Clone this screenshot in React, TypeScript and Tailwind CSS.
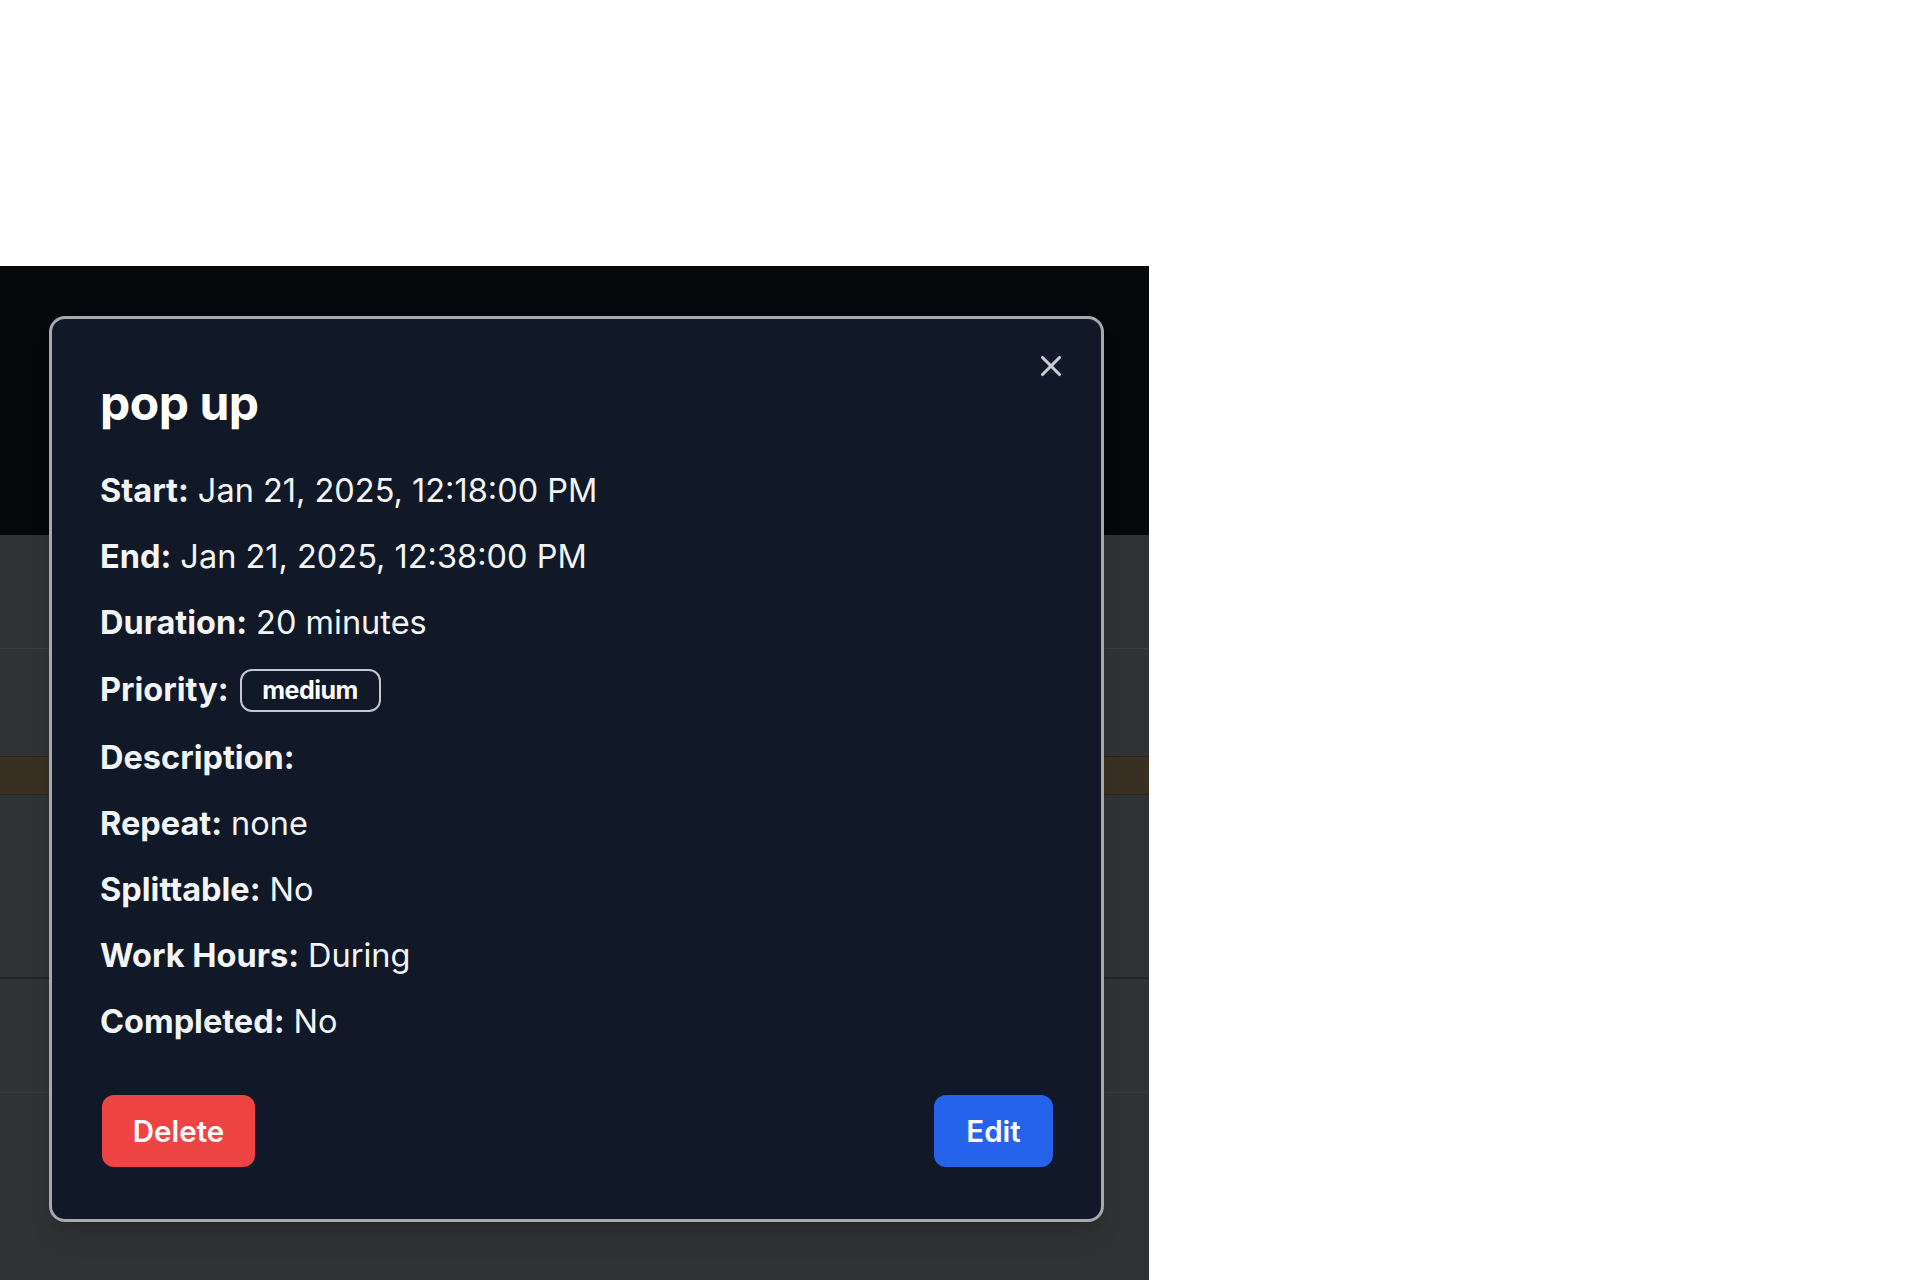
import { X } from 'lucide-react'

const rows: { label: string; value?: string }[] = [
  { label: 'Start:', value: 'Jan 21, 2025, 12:18:00 PM' },
  { label: 'End:', value: 'Jan 21, 2025, 12:38:00 PM' },
  { label: 'Duration:', value: '20 minutes' },
]

const rowsAfter: { label: string; value?: string }[] = [
  { label: 'Description:' },
  { label: 'Repeat:', value: 'none' },
  { label: 'Splittable:', value: 'No' },
  { label: 'Work Hours:', value: 'During' },
  { label: 'Completed:', value: 'No' },
]

function Row({ label, value }: { label: string; value?: string }) {
  return (
    <p className="h-[40px] flex items-center text-[32.5px] leading-[40px] text-[#f3f4f6]">
      <span className="font-bold">{label}</span>
      {value && <span className="ml-[9px]">{value}</span>}
    </p>
  )
}

export default function App() {
  return (
    <div className="w-[1920px] h-[1280px] bg-white font-['Inter','Liberation_Sans',sans-serif]">
      <div className="pt-[266px] w-[1149px]">
        <div className="relative h-[1014px] bg-[#313233] flex flex-col">
          {/* calendar behind the dialog */}
          <div className="h-[269px] bg-[#05070b]"></div>
          <div className="h-[114px] border-b border-[#3b3c3d]"></div>
          <div className="h-[107px]"></div>
          <div className="h-[39px] bg-[#3a2f23] border-y border-[#2a2420]"></div>
          <div className="h-[184px] border-b-2 border-[#222324]"></div>
          <div className="h-[114px] border-b border-[#3a3b3c]"></div>
          <div className="flex-1"></div>

          {/* dialog */}
          <div className="absolute left-[49px] top-[50px] w-[1055px] h-[906px] rounded-[16px] border-[3px] border-[#a5a9b0] bg-[#111827] shadow-xl px-[48px] pt-[56px]">
            <button className="absolute right-[33px] top-[30px] text-[#c9ccd2]">
              <X size={34} strokeWidth={2.2} />
            </button>

            <h2 className="h-[56px] flex items-center text-[48px] font-bold tracking-[-0.01em] text-white">pop up</h2>

            <div className="mt-[40px] flex flex-col gap-[26px]">
              {rows.map((r) => (
                <Row key={r.label} {...r} />
              ))}
              <div className="h-[43px] flex items-center text-[32.5px] text-[#f3f4f6]">
                <span className="font-bold">Priority:</span>
                <span className="ml-[11px] h-[43px] w-[141px] flex items-center justify-center rounded-[12px] border-2 border-[#c4c7cc] text-[25px] font-bold text-white tracking-[-0.02em]">
                  medium
                </span>
              </div>
              {rowsAfter.map((r) => (
                <Row key={r.label} {...r} />
              ))}
            </div>

            <div className="mt-[53px] flex justify-between pl-[2px]">
              <button className="h-[72px] w-[153px] rounded-[12px] bg-[#ef4444] text-[29.5px] font-semibold text-white">
                Delete
              </button>
              <button className="h-[72px] w-[119px] rounded-[12px] bg-[#2563eb] text-[29.5px] font-semibold text-white">
                Edit
              </button>
            </div>
          </div>
        </div>
      </div>
    </div>
  )
}
